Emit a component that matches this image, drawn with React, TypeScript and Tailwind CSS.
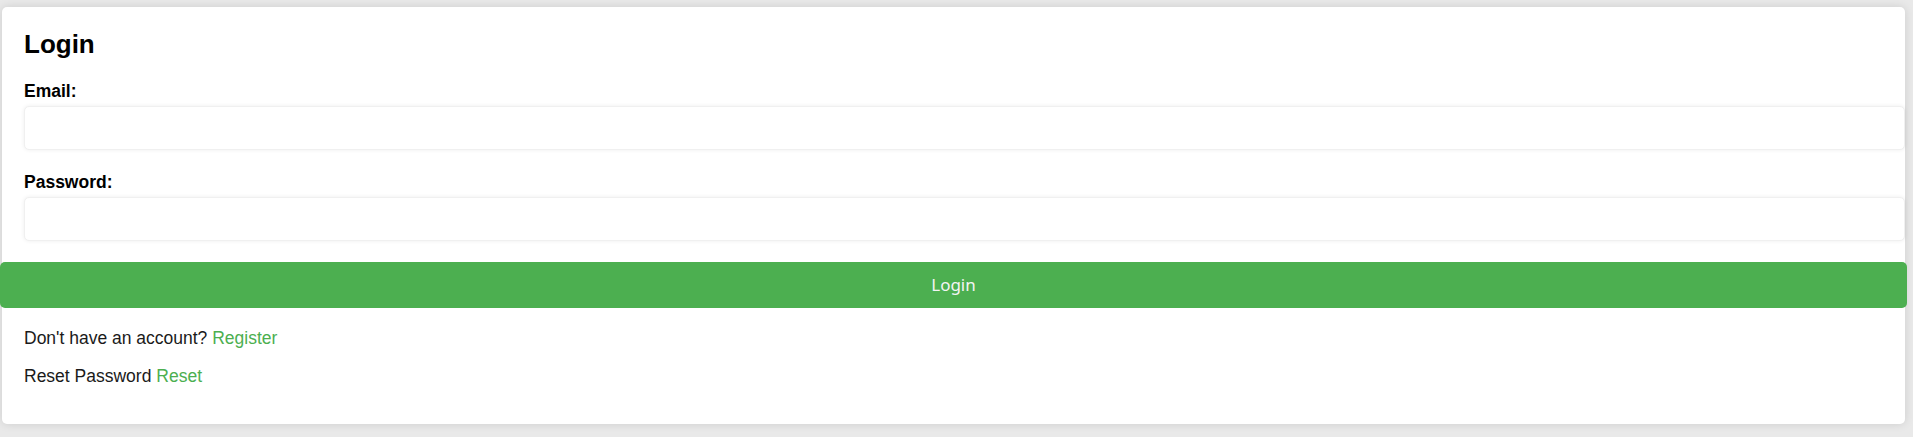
export default function App() {
  return (
    <div className="min-h-[437px] w-[1913px] bg-[#e9e9e9] pt-[7px] pl-[2px] pr-[8px] pb-[12px] font-['Liberation_Sans',Arial,sans-serif]">
      <div className="w-[1903px] rounded-[5px] bg-white pt-[22px] pb-[38px] shadow-[0_0_10px_rgba(0,0,0,0.12)]">
        {/* ── Title ── */}
        <h2 className="pl-[22px] text-[26px] font-bold leading-[30px] text-black">Login</h2>

        {/* ── Form ── */}
        <form className="mt-[22px] flex flex-col" onSubmit={(e) => e.preventDefault()}>
          <div className="flex flex-col pl-[22px]">
            <label htmlFor="email" className="text-[17.5px] font-bold leading-[20px] text-black">
              Email:
            </label>
            <input
              id="email"
              type="email"
              className="mt-[5px] h-[44px] w-[1881px] rounded-[5px] border border-[#f0f0f0] bg-white px-3 shadow-[0_0_4px_rgba(0,0,0,0.07)] outline-none"
            />
          </div>

          <div className="mt-[22px] flex flex-col pl-[22px]">
            <label htmlFor="password" className="text-[17.5px] font-bold leading-[20px] text-black">
              Password:
            </label>
            <input
              id="password"
              type="password"
              className="mt-[5px] h-[44px] w-[1881px] rounded-[5px] border border-[#f0f0f0] bg-white px-3 shadow-[0_0_4px_rgba(0,0,0,0.07)] outline-none"
            />
          </div>

          <button
            type="submit"
            className="-ml-[2px] mt-[21px] flex h-[46px] w-[1907px] items-center justify-center rounded-[5px] bg-[#4caf50] font-['Noto_Sans',sans-serif] text-[17px] text-[#f4f4f4]"
          >
            Login
          </button>
        </form>

        {/* ── Links ── */}
        <div className="pl-[22px] text-[17.5px] leading-[20px] text-[#1a1a1a]">
          <p className="mt-[20px]">
            Don't have an account? <a className="text-[#4caf50]">Register</a>
          </p>
          <p className="mt-[18px]">
            Reset Password <a className="text-[#4caf50]">Reset</a>
          </p>
        </div>
      </div>
    </div>
  );
}
